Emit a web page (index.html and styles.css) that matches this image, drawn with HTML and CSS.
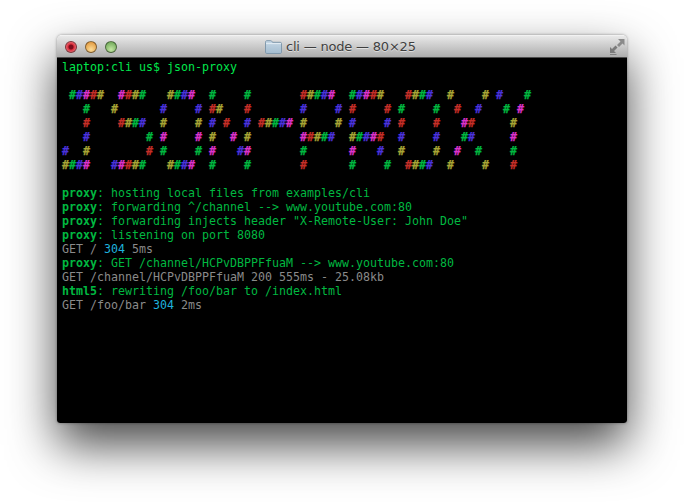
FILE: index.html
```html
<!DOCTYPE html>
<html lang="en">
<head>
<meta charset="utf-8">
<title>cli — node — 80×25</title>
<link rel="stylesheet" href="styles.css">
</head>
<body>
<main class="window">
<header class="titlebar">
<div class="lights">
<span class="light light-red"></span>
<span class="light light-amber"></span>
<span class="light light-green"></span>
</div>
<div class="title">
<svg class="folder" width="17" height="14" viewBox="0 0 17 14">
<defs><linearGradient id="fg" x1="0" y1="0" x2="0" y2="1"><stop offset="0" stop-color="#c6d8e6"/><stop offset="1" stop-color="#a3bccf"/></linearGradient></defs>
<path d="M.5 2.2C.5 1.2 1 .7 1.8.7h4c.6 0 .9.3 1.2.8l.5.8h7.7c.8 0 1.3.5 1.3 1.2v8.8c0 .7-.5 1.2-1.3 1.2H1.8c-.8 0-1.3-.5-1.3-1.2z" fill="url(#fg)" stroke="#8199ac"/>
<path d="M1 3.6h15" stroke="#e3edf4" fill="none"/>
</svg>
<span>cli — node — 80×25</span>
</div>
<svg class="resize" width="16" height="17" viewBox="0 0 16 17">
<path d="M9 1h6.500v6.500l-2-2-3.500 3.500-2-2 3.500-3.500z" fill="#8a8a8a"/>
<path d="M1 9l2 2 3.500-3.500 2 2L5 13l2 2H1z" fill="#7a7a7a"/>
<path d="M1 16.500h6.500" stroke="#808080" fill="none"/>
</svg>
</header>
<pre class="terminal"><span class="prompt">laptop:cli us$ json-proxy</span>

<b class="art"> <i class="g">#</i><i class="b">#</i><i class="m">#</i><i class="r">#</i><i class="y">#</i>  <i class="m">#</i><i class="r">#</i><i class="y">#</i><i class="g">#</i>   <i class="y">#</i><i class="g">#</i><i class="b">#</i><i class="m">#</i>  <i class="g">#</i>    <i class="g">#</i>       <i class="r">#</i><i class="y">#</i><i class="g">#</i><i class="b">#</i><i class="m">#</i>  <i class="g">#</i><i class="b">#</i><i class="m">#</i><i class="r">#</i><i class="y">#</i>   <i class="r">#</i><i class="y">#</i><i class="g">#</i><i class="b">#</i>  <i class="y">#</i>    <i class="y">#</i> <i class="b">#</i>   <i class="g">#</i>
   <i class="g">#</i>   <i class="y">#</i>      <i class="b">#</i>    <i class="b">#</i> <i class="r">#</i><i class="y">#</i>   <i class="r">#</i>       <i class="b">#</i>    <i class="b">#</i> <i class="r">#</i>    <i class="r">#</i> <i class="g">#</i>    <i class="g">#</i>  <i class="r">#</i>  <i class="b">#</i>   <i class="g">#</i> <i class="m">#</i>
   <i class="r">#</i>    <i class="r">#</i><i class="y">#</i><i class="g">#</i><i class="b">#</i>  <i class="y">#</i>    <i class="y">#</i> <i class="b">#</i> <i class="r">#</i>  <i class="b">#</i> <i class="r">#</i><i class="y">#</i><i class="g">#</i><i class="b">#</i><i class="m">#</i> <i class="y">#</i>    <i class="y">#</i> <i class="b">#</i>    <i class="b">#</i> <i class="r">#</i>    <i class="r">#</i>   <i class="m">#</i><i class="r">#</i>     <i class="y">#</i>
   <i class="b">#</i>        <i class="g">#</i> <i class="m">#</i>    <i class="m">#</i> <i class="y">#</i>  <i class="m">#</i> <i class="y">#</i>       <i class="m">#</i><i class="r">#</i><i class="y">#</i><i class="g">#</i><i class="b">#</i>  <i class="y">#</i><i class="g">#</i><i class="b">#</i><i class="m">#</i><i class="r">#</i>  <i class="b">#</i>    <i class="b">#</i>   <i class="g">#</i><i class="b">#</i>     <i class="m">#</i>
<i class="b">#</i>  <i class="y">#</i>        <i class="r">#</i> <i class="g">#</i>    <i class="g">#</i> <i class="m">#</i>   <i class="b">#</i><i class="m">#</i>       <i class="g">#</i>      <i class="m">#</i>   <i class="b">#</i>  <i class="y">#</i>    <i class="y">#</i>  <i class="m">#</i>  <i class="g">#</i>    <i class="g">#</i>
<i class="y">#</i><i class="g">#</i><i class="b">#</i><i class="m">#</i>   <i class="b">#</i><i class="m">#</i><i class="r">#</i><i class="y">#</i><i class="g">#</i>   <i class="y">#</i><i class="g">#</i><i class="b">#</i><i class="m">#</i>  <i class="g">#</i>    <i class="g">#</i>       <i class="r">#</i>      <i class="g">#</i>    <i class="g">#</i>  <i class="r">#</i><i class="y">#</i><i class="g">#</i><i class="b">#</i>  <i class="y">#</i>    <i class="y">#</i>   <i class="r">#</i></b>

<span class="log"><b>proxy</b>: hosting local files from examples/cli</span>
<span class="log"><b>proxy</b>: forwarding ^/channel --&gt; www.youtube.com:80</span>
<span class="log"><b>proxy</b>: forwarding injects header "X-Remote-User: John Doe"</span>
<span class="log"><b>proxy</b>: listening on port 8080</span>
<span class="req">GET / <span class="status">304</span> 5ms</span>
<span class="log"><b>proxy</b>: GET /channel/HCPvDBPPFfuaM --&gt; www.youtube.com:80</span>
<span class="req">GET /channel/HCPvDBPPFfuaM 200 555ms - 25.08kb</span>
<span class="log"><b>html5</b>: rewriting /foo/bar to /index.html</span>
<span class="req">GET /foo/bar <span class="status">304</span> 2ms</span></pre>
</main>
</body>
</html>
```
FILE: styles.css
```css
html, body {
  margin: 0;
  height: 100%;
  background: #fff;
  overflow: hidden;
}
body {
  padding: 35px 0 0 57px;
  box-sizing: border-box;
}
.window {
  width: 570px;
  height: 388px;
  display: flex;
  flex-direction: column;
  border-radius: 5px 5px 3px 3px;
  box-shadow: 0 22px 48px rgba(0, 0, 0, .72), 0 0 3px rgba(0, 0, 0, .4);
  overflow: hidden;
}
.titlebar {
  height: 23px;
  flex: none;
  display: flex;
  align-items: center;
  position: relative;
  box-sizing: border-box;
  background: linear-gradient(#e9e9e9, #d6d6d6 30%, #adadad);
  border-top: 1px solid #f2f2f2;
  border-bottom: 1px solid #4d4d4d;
}
.lights {
  display: flex;
  gap: 8px;
  padding-left: 8px;
}
.light {
  width: 12px;
  height: 12px;
  border-radius: 50%;
  box-sizing: border-box;
  border: 1px solid rgba(0, 0, 0, .45);
}
.light-red { background: radial-gradient(circle at 50% 50%, #7d0c1c 0 2px, #db2f3d 3px, #f08088 6px); }
.light-amber { background: radial-gradient(circle at 50% 75%, #fcdc96, #e0953a 90%); }
.light-green { background: radial-gradient(circle at 50% 75%, #c3e6a3, #6ca655 90%); }
.title {
  position: absolute;
  left: 208px;
  top: 2px;
  display: flex;
  align-items: center;
  gap: 4px;
  font: 13px/17px "DejaVu Sans", sans-serif;
  letter-spacing: -.2px;
  color: #3f3f3f;
  text-shadow: 0 1px 0 rgba(255, 255, 255, .5);
}
.resize {
  position: absolute;
  right: 2px;
  top: 2px;
}
.terminal {
  flex: 1;
  margin: 0;
  padding: 2px 5px 0;
  background: #000;
  font: 11.63px/14px "DejaVu Sans Mono", monospace;
}
.prompt { color: #00e64d; }
.art { -webkit-text-stroke: .25px; }
.art i { font-style: normal; }
.g { color: #00b840; }
.b { color: #4b33dd; }
.m { color: #dd33cc; }
.r { color: #c62f28; }
.y { color: #a8a535; }
.log { color: #00b840; }
.req { color: #8a8a8a; }
.status { color: #1eb1dd; }
```
